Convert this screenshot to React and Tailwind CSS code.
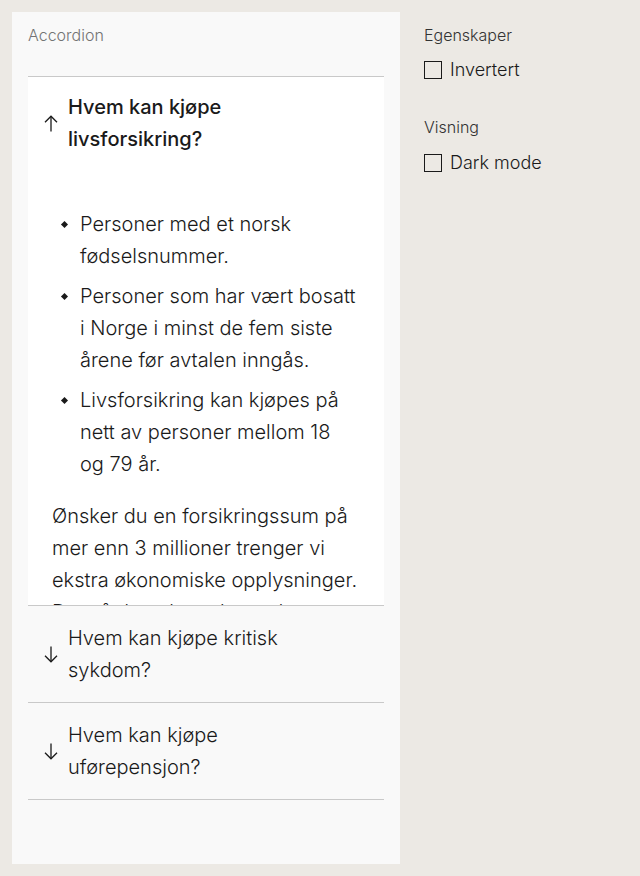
import React, { useState } from "react";

const ArrowIcon = ({ up }) => (
  <svg
    width="14"
    height="17"
    viewBox="0 0 14 17"
    fill="none"
    stroke="#1a1a1a"
    strokeWidth="1.3"
    className={up ? "shrink-0" : "shrink-0 rotate-180"}
  >
    <path d="M7 16.5V1.2" />
    <path d="M1 7.2L7 1.2L13 7.2" />
  </svg>
);

const bullets = [
  "Personer med et norsk fødselsnummer.",
  "Personer som har vært bosatt i Norge i minst de fem siste årene før avtalen inngås.",
  "Livsforsikring kan kjøpes på nett av personer mellom 18 og 79 år.",
];

const Checkbox = ({ label, checked, onChange }) => (
  <label className="flex items-center gap-2 cursor-pointer">
    <span className="w-[18px] h-[18px] border-[1.5px] border-[#1a1a1a] bg-transparent flex items-center justify-center">
      {checked && <span className="w-[10px] h-[10px] bg-[#1a1a1a]" />}
    </span>
    <input type="checkbox" className="hidden" checked={checked} onChange={onChange} />
    <span className="text-[18px] leading-[28px] text-[#1a1a1a]">{label}</span>
  </label>
);

export default function App() {
  const [open, setOpen] = useState(0);
  const [inverted, setInverted] = useState(false);
  const [dark, setDark] = useState(false);

  const font = { fontFamily: "Inter, 'Liberation Sans', sans-serif" };

  return (
    <div className="min-h-[876px] bg-[#ece9e4] flex gap-6 p-3 font-light" style={font}>
      {/* Panneau accordion */}
      <div className="w-[388px] h-[852px] bg-[#f9f9f9] px-4 pt-[11px]">
        <p className="text-[16px] leading-[24px] text-[#737373]">Accordion</p>
        <div className="mt-[29px] border-t border-[#c9c9c9]">
          {/* Element ouvert */}
          <div className="bg-white border-b border-[#c9c9c9] h-[529px] overflow-hidden">
            <button
              onClick={() => setOpen(open === 0 ? -1 : 0)}
              className="w-full flex items-center gap-[10px] pl-4 pr-4 pt-[14px] pb-4 text-left"
            >
              <ArrowIcon up />
              <span className="text-[20px] leading-[32px] font-medium text-[#1a1a1a]">
                Hvem kan kjøpe
                <br />
                livsforsikring?
              </span>
            </button>
            <div className="pl-6 pr-[26px] pt-[37px] text-[20px] leading-[32px] text-[#1a1a1a]">
              <ul className="flex flex-col gap-2">
                {bullets.map((b) => (
                  <li key={b} className="flex">
                    <span className="w-7 flex items-start pl-[10px] pt-[14px] shrink-0">
                      <span className="w-[5px] h-[5px] bg-[#1a1a1a] rotate-45" />
                    </span>
                    <span>{b}</span>
                  </li>
                ))}
              </ul>
              <p className="mt-5">
                Ønsker du en forsikringssum på mer enn 3 millioner trenger vi ekstra økonomiske
                opplysninger. Da må du ta kontakt med oss.
              </p>
            </div>
          </div>

          {["Hvem kan kjøpe kritisk sykdom?", "Hvem kan kjøpe uførepensjon?"].map((q, i) => (
            <div key={q} className="border-b border-[#c9c9c9]">
              <button
                onClick={() => setOpen(i + 1)}
                className="w-full flex items-center gap-[10px] px-4 py-4 text-left"
              >
                <ArrowIcon />
                <span className="text-[20px] leading-[32px] text-[#1a1a1a]">
                  {i === 0 ? (
                    <>
                      Hvem kan kjøpe kritisk
                      <br />
                      sykdom?
                    </>
                  ) : (
                    <>
                      Hvem kan kjøpe
                      <br />
                      uførepensjon?
                    </>
                  )}
                </span>
              </button>
            </div>
          ))}
        </div>
      </div>

      {/* Proprietes */}
      <div className="pt-[11px] flex flex-col">
        <p className="text-[16px] leading-[24px] text-[#333333]">Egenskaper</p>
        <div className="mt-[9px]">
          <Checkbox label="Invertert" checked={inverted} onChange={() => setInverted(!inverted)} />
        </div>
        <p className="mt-[31px] text-[16px] leading-[24px] text-[#333333]">Visning</p>
        <div className="mt-[10px]">
          <Checkbox label="Dark mode" checked={dark} onChange={() => setDark(!dark)} />
        </div>
      </div>
    </div>
  );
}
